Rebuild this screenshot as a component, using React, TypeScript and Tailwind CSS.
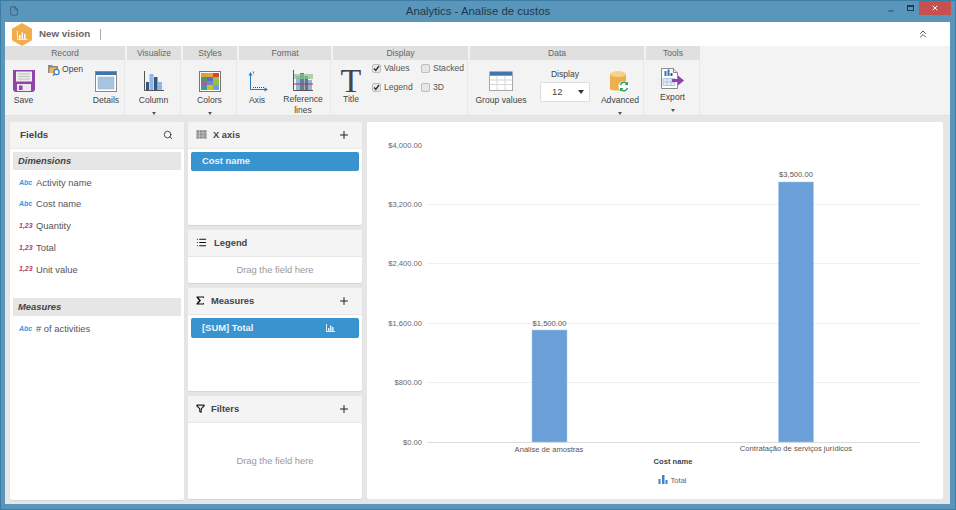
import React from 'react';
import { Search, Plus, ChevronsUp, List, Filter, Minus, X, File } from 'lucide-react';

const font = 'font-["Liberation_Sans",Arial,sans-serif]';

const Caret = () => (
  <div className="w-0 h-0 border-l-[2.5px] border-r-[2.5px] border-t-[3px] border-l-transparent border-r-transparent border-t-[#555]" />
);

const SaveIcon = () => (
  <svg width="22" height="22" viewBox="0 0 22 22">
    <path d="M0 0h22v20l-2 2H2l-2-2z" fill="#8e44a8" />
    <rect x="3" y="1.5" width="16" height="10" fill="#eeeeee" />
    <path d="M5 4h12M5 6.5h12M5 9h12" stroke="#bbb" strokeWidth="1" />
    <rect x="4" y="14" width="14" height="7" fill="#f1e6f5" />
    <rect x="6" y="15.5" width="3.5" height="4.5" fill="#8e44a8" />
  </svg>
);

const OpenIcon = () => (
  <svg width="13" height="12" viewBox="0 0 13 12">
    <path d="M0 1h4l1 1h5v7H0z" fill="#8a8a8a" />
    <path d="M1.5 3.5h7V9h-7z" fill="#f2b45c" />
    <circle cx="8.5" cy="8" r="2.6" fill="#fff" stroke="#2f7fc1" strokeWidth="1.2" />
    <path d="M6.6 10l-1.6 1.6" stroke="#2f7fc1" strokeWidth="1.3" />
  </svg>
);

const DetailsIcon = () => (
  <svg width="22" height="21" viewBox="0 0 22 21">
    <rect x="0.5" y="0.5" width="21" height="20" fill="#fff" stroke="#8a8a8a" />
    <rect x="1" y="1" width="20" height="3" fill="#3f75ac" />
    <rect x="3" y="6" width="16" height="12" fill="#a9c4e2" stroke="#94aecb" strokeWidth="0.5" />
  </svg>
);

const ColumnIcon = ({ w = 20, h = 20 }: { w?: number; h?: number }) => (
  <svg width={w} height={h} viewBox="0 0 20 20">
    <path d="M0.5 0v19.5H20" stroke="#555" fill="none" />
    <rect x="2" y="11" width="3" height="8" fill="#35567f" />
    <rect x="5.5" y="3" width="4" height="16" fill="#8fb5e3" />
    <rect x="10" y="6" width="3.5" height="13" fill="#35567f" />
    <rect x="14" y="11" width="4" height="8" fill="#8fb5e3" />
  </svg>
);

const ColorsIcon = () => {
  const cells = ['#d9a03f', '#e8a040', '#d6452f', '#4f9d58', '#5a70c0', '#9bbf4a', '#a060b8', '#6f87d0', '#8bc34a', '#3f9d8a', '#d2c01f', '#6a9fd8'];
  return (
    <div className="grid grid-cols-3 w-[22px] h-[21px] border border-[#777] p-[1px] bg-white">
      {cells.map((c, i) => (
        <div key={i} style={{ backgroundColor: c }} />
      ))}
    </div>
  );
};

const AxisIcon = () => (
  <svg width="21" height="21" viewBox="0 0 21 21">
    <path d="M3.5 3v15.5H19" stroke="#2a78b8" strokeWidth="1" fill="none" />
    <path d="M1.5 4.5L3.5 1l2 3.5zM17.5 16.5L21 18.5l-3.5 2z" fill="#2a78b8" />
    <path d="M6 16.5h11" stroke="#444" strokeDasharray="1 1" />
    <path d="M5.5 0.5l1 1.2 1-1.2M6.5 1.7V3" stroke="#2a78b8" strokeWidth="0.7" fill="none" />
  </svg>
);

const RefLinesIcon = () => (
  <svg width="20" height="21" viewBox="0 0 20 21">
    <path d="M0.5 0v20.5H20" stroke="#555" fill="none" />
    <rect x="3" y="6" width="4" height="14" fill="#8fb5e3" />
    <rect x="7" y="3" width="4" height="17" fill="#35567f" opacity="0.75" />
    <rect x="11.5" y="6" width="3.5" height="14" fill="#35567f" opacity="0.8" />
    <rect x="15" y="10" width="4" height="10" fill="#8fb5e3" />
    <rect x="1" y="4" width="19" height="5" fill="#8fc28a" opacity="0.7" />
    <path d="M1 14h19" stroke="#c0392b" strokeWidth="1" />
  </svg>
);

const GroupValuesIcon = () => (
  <svg width="24" height="20" viewBox="0 0 24 20">
    <rect x="0.5" y="0.5" width="23" height="4" fill="#3f75ac" />
    <rect x="0.5" y="4.5" width="23" height="15" fill="#fff" stroke="#555" strokeDasharray="1 1" />
    <path d="M8 5v14M16 5v14M1 9h22M1 13.5h22" stroke="#d5d5d5" />
  </svg>
);

const AdvancedIcon = () => (
  <svg width="20" height="21" viewBox="0 0 20 21">
    <path d="M0 3v15c0 2 16 2 16 0V3z" fill="#eeb04f" />
    <ellipse cx="8" cy="3" rx="8" ry="3" fill="#f6d28d" />
    <circle cx="14" cy="15.5" r="5.5" fill="#fff" />
    <path d="M10.5 14a3.8 3.8 0 0 1 6.5-1.5M17.5 17a3.8 3.8 0 0 1-6.5 1.5" stroke="#2f9d6a" strokeWidth="1.5" fill="none" />
    <path d="M18 10.5v3.5h-3.5zM10 20.5V17h3.5z" fill="#2f9d6a" />
  </svg>
);

const ExportIcon = () => (
  <svg width="23" height="21" viewBox="0 0 23 21">
    <path d="M0.5 0.5h12l4 4v16H0.5z" fill="#fff" stroke="#8a8a8a" />
    <path d="M12.5 0.5v4h4" fill="#e5e5e5" stroke="#8a8a8a" />
    <path d="M3.5 8V3h2v5zM6.5 8V1.5h2V8z" fill="#2a78b8" />
    <path d="M9.5 8V5h2v3z" fill="#35567f" />
    <path d="M2 10.5h12v7H2zM2 14h12M6 10.5v7M10 10.5v7" stroke="#9db7d4" fill="#e4edf6" strokeWidth="0.7" />
    <path d="M11 11h6V7.5l6 5-6 5V14h-6z" fill="#8e44a8" />
  </svg>
);

const SigmaIcon = () => (
  <svg width="9" height="9" viewBox="0 0 9 9">
    <path d="M0.5 0.5h7.5v2L7 1.5H2.5L5 4.5 2.5 7.5H7L8 6.5v2H0.5v-1L3 4.5 0.5 1.5z" fill="#111" />
  </svg>
);

const GridIcon = () => (
  <svg width="11" height="9" viewBox="0 0 11 9">
    <rect width="11" height="9" fill="#8d8d8d" />
    <path d="M0 0h11M0 3h11M0 6h11M0 8.5h11M0.5 0v9M3.5 0v9M7 0v9M10.5 0v9" stroke="#d7d7d7" strokeWidth="0.6" />
  </svg>
);

const BarGlyph = ({ color }: { color: string }) => (
  <svg width="9" height="8" viewBox="0 0 9 8">
    <path d="M0 0v8h9V7H1V0z" fill={color} />
    <path d="M2 4h1.5v3H2zM4 1.5h1.5V7H4zM6 3h1.5v4H6z" fill={color} />
  </svg>
);

const Tool = ({ label, icon, width, caret, top = 'pt-[10px]', second }: { label: string; icon: React.ReactNode; width: string; caret?: boolean; top?: string; second?: string }) => (
  <div className={`${width} ${top} flex flex-col items-center shrink-0`}>
    <div className="h-[22px] flex items-center justify-center">{icon}</div>
    <div className="mt-[3px] text-[8.6px] leading-[11px] text-[#444] text-center whitespace-nowrap">{label}</div>
    {second && <div className="mt-[0px] text-[8.6px] leading-[11px] text-[#444]">{second}</div>}
    {caret && <div className="mt-[6px]"><Caret /></div>}
  </div>
);

const Group = ({ title, width, children, mr = 'mr-[2px]' }: { title: string; width: string; children: React.ReactNode; mr?: string }) => (
  <div className={`${width} ${mr} shrink-0 flex flex-col`}>
    <div className="h-[14px] bg-[#e0e0e0] text-[8.6px] leading-[14px] text-[#666] text-center">{title}</div>
    <div className="h-[55px] flex border-r border-[#e8e8e8]">{children}</div>
  </div>
);

const Check = ({ label, checked }: { label: string; checked?: boolean }) => (
  <div className="flex items-center gap-[3px] h-[10px]">
    <div className="w-[9px] h-[9px] rounded-[2px] bg-[#e6e6e6] border border-[#bdbdbd] flex items-center justify-center">
      {checked && (
        <svg width="7" height="7" viewBox="0 0 7 7">
          <path d="M1 3.5l1.8 2L6 1" stroke="#333" strokeWidth="1.4" fill="none" />
        </svg>
      )}
    </div>
    <span className="text-[8.6px] leading-[10px] text-[#555]">{label}</span>
  </div>
);

const PanelHeader = ({ icon, title, add, gap = 'gap-[6px]' }: { icon?: React.ReactNode; title: string; add?: boolean; gap?: string }) => (
  <div className="h-[27px] bg-[#f4f4f4] border-b border-[#e8e8e8] flex items-center pl-[8px] pr-[12px] shrink-0">
    <div className={`flex items-center ${gap} flex-1`}>
      {icon}
      <span className="text-[9.4px] font-bold text-[#444]">{title}</span>
    </div>
    {add && <Plus size={12} strokeWidth={2} className="text-[#222]" />}
  </div>
);

const Panel = ({ height, className = '', children }: { height: string; className?: string; children: React.ReactNode }) => (
  <div className={`${height} ${className} bg-white rounded-[2px] shadow-[0_1px_1px_rgba(0,0,0,0.08)] flex flex-col shrink-0 overflow-hidden`}>{children}</div>
);

const Field = ({ kind, label }: { kind: 'abc' | 'num'; label: string }) => (
  <div className="h-[21.7px] flex items-center pl-[6px]">
    <span className={`w-[17px] text-[7px] italic font-bold ${kind === 'abc' ? 'text-[#2e9be6]' : 'text-[#b83a63]'}`}>
      {kind === 'abc' ? 'Abc' : '1,23'}
    </span>
    <span className="text-[9.4px] text-[#555]">{label}</span>
  </div>
);

const Band = ({ title }: { title: string }) => (
  <div className="h-[18px] bg-[#e6e6e6] flex items-center pl-[5px] text-[9.4px] italic font-bold text-[#444]">{title}</div>
);

const Chart = () => {
  const ticks = [
    ['$4,000.00', 144],
    ['$3,200.00', 203],
    ['$2,400.00', 262],
    ['$1,600.00', 322],
    ['$800.00', 381],
    ['$0.00', 441],
  ] as const;
  return (
    <svg viewBox="367 121 576 377" className="w-full h-full" fontFamily="'Liberation Sans', Arial, sans-serif">
      {ticks.map(([label, y]) => (
        <g key={label}>
          {y !== 144 && <line x1="427" x2="920" y1={y + 0.5} y2={y + 0.5} stroke={y === 441 ? '#dcdcdc' : '#efefef'} />}
          <text x="422" y={y + 2.7} textAnchor="end" fontSize="7.6" fill="#666">{label}</text>
        </g>
      ))}
      <rect x="532" y="329" width="35" height="112" fill="#6a9fd8" stroke="#a8c8ec" strokeWidth="0.5" />
      <rect x="778.5" y="181" width="35" height="260" fill="#6a9fd8" stroke="#a8c8ec" strokeWidth="0.5" />
      <text x="549.5" y="324.5" textAnchor="middle" fontSize="7.6" fill="#555">$1,500.00</text>
      <text x="796" y="175.5" textAnchor="middle" fontSize="7.6" fill="#555">$3,500.00</text>
      <text x="549" y="451" textAnchor="middle" fontSize="7.6" fill="#555">Análise de amostras</text>
      <text x="796" y="450" textAnchor="middle" fontSize="7.6" fill="#555">Contratação de serviços jurídicos</text>
      <text x="673" y="463" textAnchor="middle" fontSize="7.6" fontWeight="bold" fill="#444">Cost name</text>
      <path d="M658.5 478h2v5h-2zM662 474h2.5v9H662zM665.5 479h2v4h-2z" fill="#3f84c4" />
      <text x="670.5" y="481.5" fontSize="7.6" fill="#666">Total</text>
    </svg>
  );
};

export default function App() {
  return (
    <div className={`${font} w-[956px] h-[510px] bg-[#5a96bb] border border-[#3d7ca3] flex flex-col overflow-hidden`}>
      {/* title bar */}
      <div className="h-[21px] relative flex items-center justify-center shrink-0">
        <File size={10} strokeWidth={1} className="absolute left-[8px] top-[5px] text-[#222]" />
        <span className="text-[11.4px] text-[#20384a]">Analytics - Analise de custos</span>
        <Minus size={8} strokeWidth={2.5} className="absolute left-[886px] top-[6px] text-[#1c3c52]" />
        <div className="absolute left-[906px] top-[4px] w-[7px] h-[6px] border border-[#1c3c52] border-t-2" />
        <div className="absolute left-[918px] top-[0px] w-[32px] h-[14px] bg-[#c75050] flex items-center justify-center">
          <X size={8} strokeWidth={3} className="text-white" />
        </div>
      </div>

      <div className="mx-[4px] w-[945px] flex-1 flex flex-col min-h-0">
        {/* header */}
        <div className="h-[24px] bg-white flex items-center pl-[7px] pr-[21px] shrink-0">
          <svg width="20" height="23" viewBox="0 0 20 23">
            <path d="M10 0l10 5.7v11.6L10 23 0 17.3V5.7z" fill="#f0ad4e" />
            <path d="M5.5 8v8.5h10" stroke="#fff" strokeWidth="0.8" fill="none" />
            <path d="M7 12h1.5v4H7zM9.5 9.5H11V16H9.5zM12 11h1.5v5H12z" fill="#fff" />
          </svg>
          <span className="ml-[7px] text-[9.8px] font-bold text-[#666]">New vision</span>
          <div className="ml-[10px] w-px h-[11px] bg-[#aaa]" />
          <ChevronsUp size={12} strokeWidth={2} className="ml-auto text-[#555]" />
        </div>

        {/* ribbon */}
        <div className="h-[69px] bg-[#f3f3f3] flex shrink-0">
          <Group title="Record" width="w-[120px]">
            <Tool label="Save" width="w-[37px]" icon={<SaveIcon />} />
            <div className="ml-[6px] w-[40px] pt-[4px] flex items-start gap-[1px]">
              <OpenIcon />
              <span className="text-[8.6px] leading-[11px] text-[#444]">Open</span>
            </div>
            <Tool label="Details" width="w-[36px]" icon={<DetailsIcon />} />
          </Group>
          <Group title="Visualize" width="w-[54px]">
            <Tool label="Column" width="w-full" caret icon={<ColumnIcon />} />
          </Group>
          <Group title="Styles" width="w-[54px]">
            <Tool label="Colors" width="w-full" caret icon={<ColorsIcon />} />
          </Group>
          <Group title="Format" width="w-[92px]">
            <Tool label="Axis" width="w-[36px]" icon={<AxisIcon />} />
            <Tool label="Reference" second="lines" width="w-[56px]" icon={<RefLinesIcon />} />
          </Group>
          <Group title="Display" width="w-[135px]">
            <div className="w-[36px] pt-[9px] flex flex-col items-center">
              <span className="font-['Liberation_Serif',serif] text-[34px] leading-[24px] text-[#444]">T</span>
              <span className="text-[8.6px] leading-[11px] text-[#444] mt-[1px]">Title</span>
            </div>
            <div className="pt-[3px] ml-[3px] flex flex-col gap-[9px] w-[49px]">
              <Check label="Values" checked />
              <Check label="Legend" checked />
            </div>
            <div className="pt-[3px] flex flex-col gap-[9px]">
              <Check label="Stacked" />
              <Check label="3D" />
            </div>
          </Group>
          <Group title="Data" width="w-[174px]">
            <Tool label="Group values" width="w-[62px]" top="pt-[10px]" icon={<GroupValuesIcon />} />
            <div className="w-[66px] pt-[9px] flex flex-col items-center">
              <span className="text-[8.6px] leading-[11px] text-[#444]">Display</span>
              <div className="mt-[2px] w-[50px] h-[20px] bg-white border border-[#ddd] rounded-[2px] flex items-center justify-between pl-[11px] pr-[5px]">
                <span className="text-[9.4px] text-[#444]">12</span>
                <div className="w-0 h-0 border-l-[3px] border-r-[3px] border-t-[4px] border-l-transparent border-r-transparent border-t-[#333]" />
              </div>
            </div>
            <Tool label="Advanced" width="w-[44px]" caret icon={<AdvancedIcon />} />
          </Group>
          <Group title="Tools" width="w-[54px]">
            <Tool label="Export" width="w-full" top="pt-[7px]" caret icon={<ExportIcon />} />
          </Group>
        </div>

        {/* content */}
        <div className="flex-1 min-h-0 bg-[#e6e6e6] flex pl-[5px] pt-[6px] gap-[4px] border-t border-[#e0e0e0]">
          <Panel height="h-[378px]" className="w-[174px]">
            <div className="h-[27px] bg-[#f4f4f4] border-b border-[#e8e8e8] flex items-center justify-between pl-[10px] pr-[11px] shrink-0">
              <span className="text-[9.8px] font-bold text-[#444]">Fields</span>
              <Search size={10} strokeWidth={2} className="text-[#333]" />
            </div>
            <div className="px-[3px] pt-[3px]">
              <Band title="Dimensions" />
              <div className="pt-[2px]">
                <Field kind="abc" label="Activity name" />
                <Field kind="abc" label="Cost name" />
                <Field kind="num" label="Quantity" />
                <Field kind="num" label="Total" />
                <Field kind="num" label="Unit value" />
              </div>
              <div className="mt-[18px]">
                <Band title="Measures" />
              </div>
              <div className="pt-[2px]">
                <Field kind="abc" label="# of activities" />
              </div>
            </div>
          </Panel>

          <div className="w-[174px] flex flex-col gap-[5px] shrink-0">
            <Panel height="h-[103px]">
              <PanelHeader icon={<GridIcon />} title="X axis" add />
              <div className="px-[3px] pt-[3px]">
                <div className="h-[19px] bg-[#3993cf] rounded-[2px] pl-[11px] flex items-center text-[9.4px] font-bold text-[#eaf4fb]">Cost name</div>
              </div>
            </Panel>
            <Panel height="h-[53px]">
              <PanelHeader icon={<List size={11} strokeWidth={2.5} className="text-[#111]" />} title="Legend" gap="gap-[7px]" />
              <div className="flex-1 flex items-center justify-center text-[9.4px] text-[#999]">Drag the field here</div>
            </Panel>
            <Panel height="h-[103px]">
              <PanelHeader icon={<SigmaIcon />} title="Measures" gap="gap-[6px]" add />
              <div className="px-[3px] pt-[3px]">
                <div className="h-[20px] bg-[#3993cf] rounded-[2px] pl-[11px] pr-[24px] flex items-center justify-between text-[9.4px] font-bold text-[#eaf4fb]">
                  <span>[SUM] Total</span>
                  <BarGlyph color="#dcebf7" />
                </div>
              </div>
            </Panel>
            <Panel height="h-[103px]">
              <PanelHeader icon={<Filter size={9} strokeWidth={3} className="text-[#222]" />} title="Filters" gap="gap-[6px]" add />
              <div className="flex-1 flex items-center justify-center text-[9.4px] text-[#999]">Drag the field here</div>
            </Panel>
          </div>

          <div className="w-[576px] h-[377px] ml-[1px] bg-white rounded-[2px] shrink-0">
            <Chart />
          </div>
        </div>
      </div>
      <div className="h-[5px] shrink-0" />
    </div>
  );
}
